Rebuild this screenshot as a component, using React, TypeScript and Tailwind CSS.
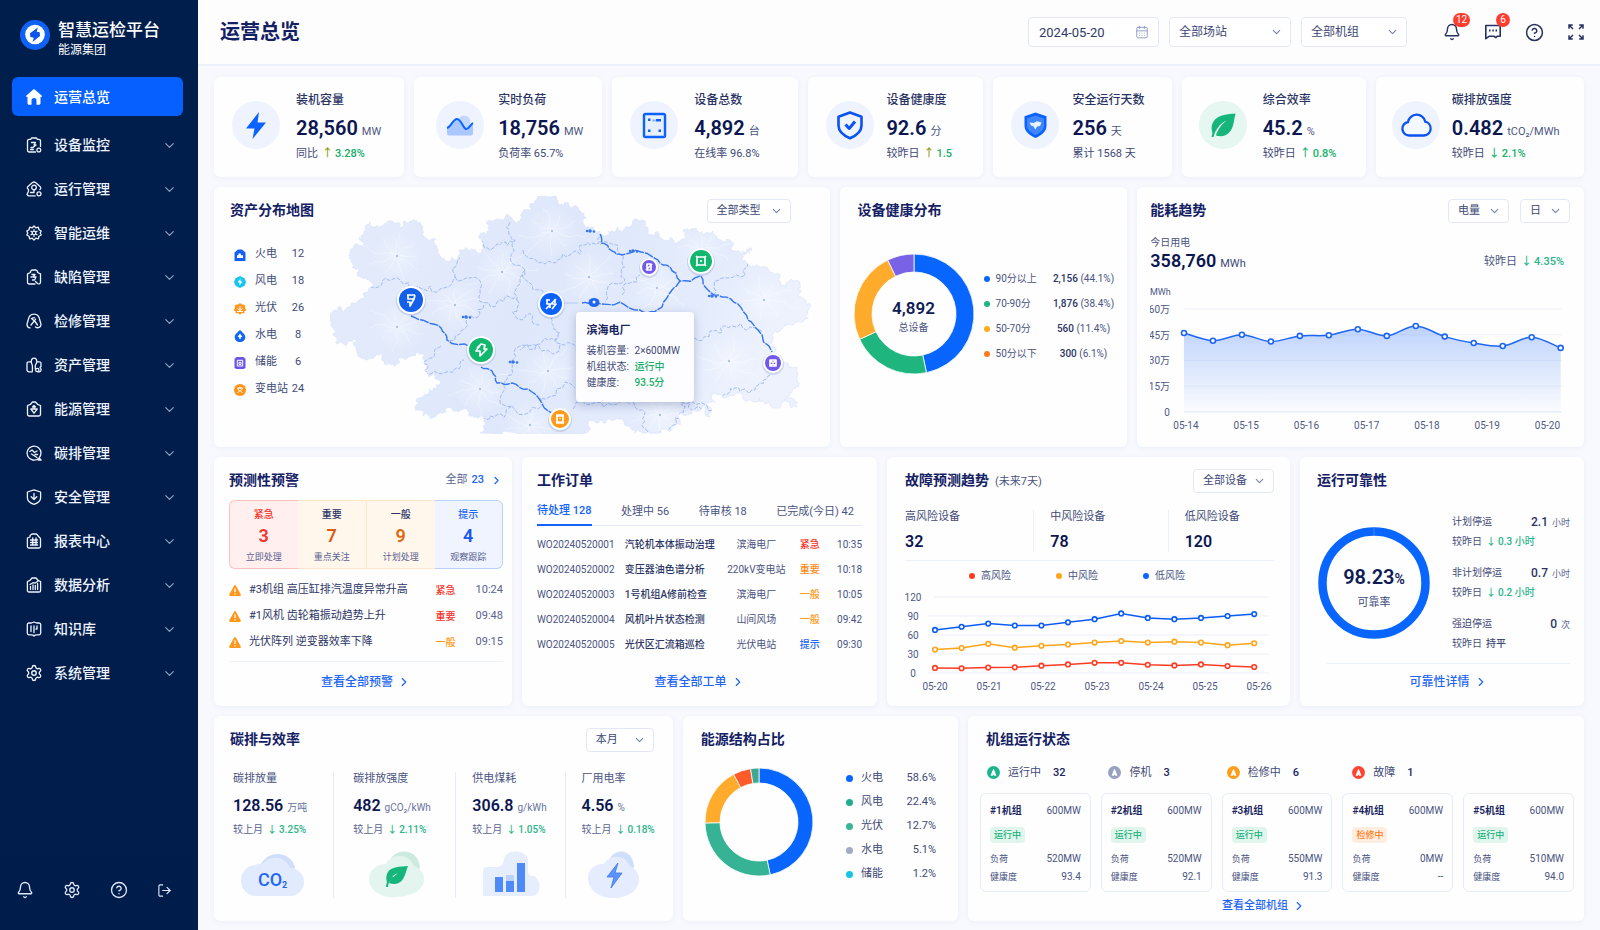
import React, { ReactNode } from 'react';
import clsx from 'clsx';
import {
  Bell,
  CalendarDays,
  ChevronDown,
  ChevronRight,
  CircleHelp,
  LogOut,
  Settings,
} from 'lucide-react';

type Point = [number, number];

/* ---------- helpers ---------- */

// Midpoint displacement, gives borders and rivers a natural ragged line
const roughen = (points: Point[], seed: number, amount: number, depth = 4) => {
  let state = seed;
  const random = () => {
    state = (state * 1103515245 + 12345) % 2147483648;
    return state / 2147483648 - 0.5;
  };
  let line = points;
  for (let level = 0; level < depth; level += 1) {
    const next: Point[] = [line[0]];
    for (let i = 1; i < line.length; i += 1) {
      const [ax, ay] = line[i - 1];
      const [bx, by] = line[i];
      const shift = random() * amount;
      next.push([(ax + bx) / 2 - (by - ay) * shift, (ay + by) / 2 + (bx - ax) * shift]);
      next.push([bx, by]);
    }
    line = next;
  }
  return `M${line.map(([x, y]) => `${x.toFixed(1)} ${y.toFixed(1)}`).join('L')}`;
};

const smoothPath = (points: Point[]) =>
  points.reduce((path, [x, y], i) => {
    if (i === 0) return `M${x} ${y}`;
    const before = points[Math.max(i - 2, 0)];
    const prev = points[i - 1];
    const after = points[Math.min(i + 1, points.length - 1)];
    const c1 = [prev[0] + (x - before[0]) / 6, prev[1] + (y - before[1]) / 6];
    const c2 = [x - (after[0] - prev[0]) / 6, y - (after[1] - prev[1]) / 6];
    return `${path}C${c1[0]} ${c1[1]} ${c2[0]} ${c2[1]} ${x} ${y}`;
  }, '');

/* ---------- shared pieces ---------- */

type CardProps = {
  children: ReactNode;
  className?: string;
};

const Card = ({ children, className }: CardProps) => (
  <section
    className={clsx(
      'relative flex min-w-0 flex-col rounded-md bg-[#fefefe] shadow-[0_1px_5px_rgba(40,70,150,0.06)]',
      className,
    )}
  >
    {children}
  </section>
);

const CardHeader = ({ title, note, children }: { title: string; note?: string; children?: ReactNode }) => (
  <div className="relative flex h-6 items-start justify-between">
    <h2 className="text-sm leading-[22px] font-semibold text-[#132064]">
      {title}
      {note && <span className="ml-1.5 text-[11px] font-normal text-[#4a5482]">{note}</span>}
    </h2>
    {children}
  </div>
);

type SelectProps = {
  label: string;
  value: string;
  className: string;
};

const Select = ({ label, value, className }: SelectProps) => (
  <div className={clsx('relative', className)}>
    <select
      aria-label={label}
      className="h-full w-full appearance-none rounded border border-[#e3e8f7] bg-white pr-5 pl-[9px] text-[#3d4775]"
    >
      <option>{value}</option>
    </select>
    <ChevronDown
      size={13}
      strokeWidth={2}
      className="pointer-events-none absolute top-1/2 right-2 -translate-y-1/2 text-[#7482ad]"
    />
  </div>
);

const MoreLink = ({ children, className }: CardProps) => (
  <a
    href="#"
    className={clsx('flex items-center justify-center gap-1 font-medium text-[#1f66f5]', className)}
  >
    {children}
    <ChevronRight size={14} />
  </a>
);

type DeltaProps = {
  label: string;
  arrow?: string;
  value: string;
  tone?: string;
  arrowTone?: string;
};

const Delta = ({ label, arrow, value, tone = 'text-[#2bb58a]', arrowTone }: DeltaProps) => (
  <>
    {label}
    {arrow && <span className={clsx('ml-1 font-medium', arrowTone ?? tone)}>{arrow}</span>}
    <span className={clsx('font-medium', arrow ? 'ml-0.5' : 'ml-1', tone)}>{value}</span>
  </>
);

type Slice = { from: number; to: number; color: string };

const Donut = ({ slices, outer, inner }: { slices: Slice[]; outer: number; inner: number }) => {
  const at = (angle: number, radius: number) => {
    const rad = (angle * Math.PI) / 180;
    return `${outer + radius * Math.sin(rad)} ${outer - radius * Math.cos(rad)}`;
  };
  return (
    <svg width={outer * 2} height={outer * 2} viewBox={`0 0 ${outer * 2} ${outer * 2}`}>
      {slices.map(({ from, to, color }) => {
        const large = to - from > 180 ? 1 : 0;
        return (
          <path
            key={from}
            fill={color}
            stroke="#fff"
            strokeWidth="0.8"
            d={`M${at(from, outer)}A${outer} ${outer} 0 ${large} 1 ${at(to, outer)}L${at(to, inner)}A${inner} ${inner} 0 ${large} 0 ${at(from, inner)}Z`}
          />
        );
      })}
    </svg>
  );
};

/* ---------- sidebar ---------- */

const MENU: { label: string; icon: ReactNode }[] = [
  {
    label: '设备监控',
    icon: (
      <>
        <path d="M9.500 15H3.200A1.700 1.700 0 0 1 1.500 13.300V4a1.700 1.700 0 0 1 1.700-1.700h1.500L5.500 1h5l.8 1.300h1.500A1.700 1.700 0 0 1 14.500 4v5.500" />
        <path d="M5.500 5.500h4L8 8h2L7 10.500H5M4.500 12.500h3" />
        <circle cx="12.800" cy="13" r="1.900" />
      </>
    ),
  },
  {
    label: '运行管理',
    icon: (
      <>
        <path d="M2.500 8.500C.8 7.500 1 5.500 2.800 4.800L6.500 1.600a2.300 2.300 0 0 1 3 0l3.700 3.200c1.800.7 2 2.700.7 3.700M2.500 8.500v1.800L1 13.500l1.500 1.400h6.700" />
        <circle cx="8" cy="6.500" r="2.300" />
        <path d="M8 8.800v2.400M4.500 11.500h3.500" />
        <circle cx="13" cy="12.800" r="2" />
      </>
    ),
  },
  {
    label: '智能运维',
    icon: (
      <>
        <path d="M6.300 2.800 8 .9l1.700 1.900 2.600-.6.7 2.500 2.200 1.300L14.200 8l1 2-2.200 1.300-.7 2.500-2.600-.6L8 15.100l-1.700-1.900-2.600.6-.7-2.500L.8 10l1-2-1-2L3 4.700l.7-2.500z" />
        <circle cx="8" cy="8" r="1.800" />
        <path d="M8 4.600v.6M8 10.800v.6M5 6.300l.5.300M10.500 9.400l.5.300M5 9.700l.5-.3M10.500 6.600l.5-.3" />
      </>
    ),
  },
  {
    label: '缺陷管理',
    icon: (
      <>
        <path d="M9 15H3.200a1.700 1.700 0 0 1-1.700-1.700V4.800l3-1.300V2.300L6 1h4l1.500 1.300v1.200l3 1.300v8.500a1.700 1.700 0 0 1-1.700 1.700" />
        <path d="M6 5.500h3L7 8h3l-1.500 3H6.500M5 8h1M9.500 12.500l2 2" />
      </>
    ),
  },
  {
    label: '检修管理',
    icon: (
      <>
        <path d="M4 14.800a3.400 3.400 0 0 1-3-3.400c0-1.500.8-2.400 1.200-4.400C2.800 3.500 5 1.200 8 1.200S13.200 3.500 13.800 7c.4 2 1.200 2.900 1.200 4.400a3.400 3.400 0 0 1-5.500 2.600" />
        <path d="M5.500 5.500 9 8.500l2.500 3.500M9.500 6.300 5 12M6.700 4.800h2" />
      </>
    ),
  },
  {
    label: '资产管理',
    icon: (
      <>
        <path d="M6.300 14.800H3a2 2 0 0 1-2-2V6.500a1.700 1.700 0 0 1 1.700-1.700h2.500c0-2 1-3.600 2.800-3.600s2.800 1.600 2.800 3.600h2.500A1.700 1.700 0 0 1 15 6.500v3l-1 1 1 1.500v1a1.800 1.800 0 0 1-1.800 1.800h-1.500" />
        <path d="M5.200 4.800c0 1.800 1.200 2.600 1.200 4.200v5M10.800 4.800c0 1.800-1.500 2.600-1.500 4.200v3" />
        <circle cx="11.300" cy="13" r="1.700" />
      </>
    ),
  },
  {
    label: '能源管理',
    icon: (
      <>
        <path d="M3.200 15A1.700 1.700 0 0 1 1.500 13.300V4.500l3-1.200L6.500 1h3l2 2.300 3 1.200v8.800a1.700 1.700 0 0 1-1.700 1.700z" />
        <path d="M4.800 8h6.400L8 12.200zM8 4.500v3.500M6.500 6 8 4.500 9.500 6" />
      </>
    ),
  },
  {
    label: '碳排管理',
    icon: (
      <>
        <path d="M12.500 13.500A7 7 0 1 1 15 8c0 2-.7 3.600-1.900 4.900l2 2.100h-3" />
        <path d="M3.800 6.500 6 5l2.500 2.500L11 6M5.500 9l5.500 3.500M9 9.500h2.500" />
      </>
    ),
  },
  {
    label: '安全管理',
    icon: (
      <>
        <path d="M8 .9 14.600 3v6c0 3-2.600 5-6.600 6.400C4 14 1.400 12 1.400 9V3z" />
        <path d="M8 4.500v5.800M5.200 7.800 8 10.500l2.800-2.700" />
      </>
    ),
  },
  {
    label: '报表中心',
    icon: (
      <>
        <path d="M3 15a1.600 1.600 0 0 1-1.600-1.600V5L4 4V2.500L6 1h4.500l3 3.500 1 1v8A1.600 1.600 0 0 1 13 15z" />
        <path d="M4.500 7h7M4.500 9.500h7M4.500 12h7M6.700 5v7M10 5v7" />
      </>
    ),
  },
  {
    label: '数据分析',
    icon: (
      <>
        <path d="M3 15a1.600 1.600 0 0 1-1.600-1.600V4.500L4 3.300 6 1h4l2 2.300 2.600 1.200v8.900A1.600 1.600 0 0 1 13 15z" />
        <path d="M4.500 12.500V9.300M7 12.500V8M9.300 12.500v-4M11.600 12.500v-6M4 7.500l3-1.800 2 .5L12 4" />
      </>
    ),
  },
  {
    label: '知识库',
    icon: (
      <>
        <path d="M8 15c-.8-1-1.500-1.200-2.500-1.200H3a1.700 1.700 0 0 1-1.700-1.700V3.700A1.700 1.700 0 0 1 3 2h2.500L8 1l2.500 1H13a1.700 1.700 0 0 1 1.700 1.700v8.400a1.700 1.700 0 0 1-1.700 1.700h-2.500c-1 0-1.700.2-2.500 1.200z" />
        <path d="M5 5v5.500M8 5v6.500M11 5v3h-1" />
      </>
    ),
  },
];

const SidebarIcon = ({ children }: { children: ReactNode }) => (
  <svg
    width="16"
    height="16"
    viewBox="0 0 16 16"
    fill="none"
    stroke="currentColor"
    strokeWidth="1.300"
    strokeLinecap="round"
    strokeLinejoin="round"
    className="overflow-visible"
  >
    {children}
  </svg>
);

const Sidebar = () => (
  <aside className="flex w-[198px] shrink-0 flex-col bg-[#001c4a] bg-linear-to-b from-[#001e4c] to-[#001c4a] text-white">
    <div className="flex items-start gap-2 pt-5 pl-5">
      <svg width="30" height="30" viewBox="0 0 30 30">
        <circle cx="15" cy="15" r="15" fill="#0e63f6" />
        <circle cx="15" cy="14.500" r="9.800" fill="#fff" />
        <path d="M17.800 7.500 10 13.300l.3 3.700 3.500.8-1.300 4.200 7.500-6-.3-3.700-3-.6z" fill="#0e55e8" />
      </svg>
      <div>
        <div className="text-[17px] leading-5 font-medium">智慧运检平台</div>
        <div className="text-xs leading-5">能源集团</div>
      </div>
    </div>

    <nav className="mt-[17px] px-3 text-sm font-medium">
      <a
        href="#"
        aria-current="page"
        className="mb-[7px] flex h-[39px] w-[171px] items-center gap-3 rounded-md bg-[#0560ff] pl-3.5"
      >
        <svg width="16" height="16" viewBox="0 0 16 16" fill="currentColor">
          <path d="M8 .3c.4 0 .7.1 1 .4l6.600 5.900c.6.600.3 1.400-.5 1.400h-.6v6.200c0 .9-.6 1.500-1.500 1.500h-2.500v-4.200a2.500 2.500 0 0 0-5 0v4.200H3c-.9 0-1.500-.6-1.500-1.500V8H.9C.1 8-.2 7.200.4 6.600L7 .7c.3-.3.600-.4 1-.4z" />
        </svg>
        运营总览
      </a>
      {MENU.map(({ label, icon }) => (
        <button key={label} type="button" className="flex h-11 w-full items-center gap-3 pl-3.5 text-[#eef3ff]">
          <SidebarIcon>{icon}</SidebarIcon>
          {label}
          <ChevronDown size={15} className="mr-[9px] ml-auto text-[#8b9cc2]" />
        </button>
      ))}
      <button type="button" className="flex h-11 w-full items-center gap-[11px] pl-[13px] text-[#eef3ff]">
        <Settings size={18} strokeWidth={1.800} />
        系统管理
        <ChevronDown size={15} className="mr-[9px] ml-auto text-[#8b9cc2]" />
      </button>
    </nav>

    <div className="mt-auto flex justify-between pr-[26px] pb-[31px] pl-4 text-[#dfe7f8]">
      <button type="button" aria-label="通知"><Bell size={18} strokeWidth={1.800} /></button>
      <button type="button" aria-label="设置"><Settings size={18} strokeWidth={1.800} /></button>
      <button type="button" aria-label="帮助"><CircleHelp size={18} strokeWidth={1.800} /></button>
      <button type="button" aria-label="退出"><LogOut size={15} strokeWidth={1.800} /></button>
    </div>
  </aside>
);

/* ---------- top bar ---------- */

const TopBar = () => (
  <header className="flex h-[66px] items-center border-b-2 border-[#edf1fa] bg-[#fdfdfe] pr-[15px] pl-[22px]">
    <h1 className="text-xl font-semibold text-[#132064]">运营总览</h1>
    <div className="ml-auto flex gap-2.5 text-xs">
      <div className="relative h-[30px] w-[131px]">
        <input
          type="text"
          aria-label="日期"
          defaultValue="2024-05-20"
          className="h-full w-full rounded border border-[#e3e8f7] bg-white pl-2.5 text-[13px] text-[#2f3a6b]"
        />
        <CalendarDays size={14} strokeWidth={1.600} className="absolute top-2 right-2.5 text-[#8d99c4]" />
      </div>
      <Select label="场站" value="全部场站" className="h-[30px] w-[122px]" />
      <Select label="机组" value="全部机组" className="h-[30px] w-[106px]" />
    </div>
    <div className="ml-9 flex items-center gap-[23px] text-[#27315f]">
      <button type="button" aria-label="告警" className="relative">
        <Bell size={18} strokeWidth={1.900} />
        <span className="absolute -top-2.5 left-2.5 rounded-full bg-[#ff3d2e] px-[3px] text-[10px] leading-[14px] text-white">
          12
        </span>
      </button>
      <button type="button" aria-label="消息" className="relative">
        <svg width="18" height="18" viewBox="0 0 18 18" fill="none" stroke="currentColor" strokeWidth="1.600" strokeLinejoin="round">
          <path d="M1.800 2.500h14.400v10.700h-2.700l-1.800 1.300-1.900-1.300H5.500l-3.700 2.500z" />
          <path d="M5 7.500h1.500M8.300 7.500h1.500M11.500 7.500H13" strokeWidth="1.800" />
        </svg>
        <span className="absolute -top-2.5 left-3 w-3.5 rounded-full bg-[#ff3d2e] text-center text-[10px] leading-[14px] text-white">
          6
        </span>
      </button>
      <button type="button" aria-label="帮助">
        <CircleHelp size={19} strokeWidth={1.900} />
      </button>
      <button type="button" aria-label="全屏">
        <svg width="18" height="18" viewBox="0 0 18 18" fill="none" stroke="currentColor" strokeWidth="1.500">
          <path d="M2 5.800V2h3.800M2.200 2.200 6 6M12.200 2H16v3.800M15.800 2.200 12 6M2 12.200V16h3.800M2.200 15.800 6 12M16 12.200V16h-3.800M15.800 15.800 12 12" />
        </svg>
      </button>
    </div>
  </header>
);

/* ---------- KPI row ---------- */

const GREEN = 'text-[#17b067]';
const OLIVE = 'text-[#8d9a10]';

type Kpi = {
  label: string;
  value: string;
  unit: string;
  foot: ReactNode;
  icon: ReactNode;
  box: string;
  disc?: string;
};

const KPIS: Kpi[] = [
  {
    label: '装机容量',
    value: '28,560',
    unit: 'MW',
    foot: <Delta label="同比" arrow="↑" value="3.28%" tone={GREEN} arrowTone={OLIVE} />,
    box: 'pl-[18px] gap-4',
    icon: <path d="m27 11-13 16.500h8.500L20.500 38 34 21.500h-8.500z" fill="#0b62ff" />,
  },
  {
    label: '实时负荷',
    value: '18,756',
    unit: 'MW',
    foot: '负荷率 65.7%',
    box: 'pl-[22px] gap-3.5',
    icon: (
      <>
        <circle cx="28" cy="21" r="6.500" fill="#c3d8ff" />
        <path d="M11 27c4-1 6-9 10-9 4 0 6 9 9 10 3 0 4-4 7-6v10a2.500 2.500 0 0 1-2.500 2.500h-21A2.500 2.500 0 0 1 11 32z" fill="#a9c8ff" />
        <path d="M11 27c4-1 6-9 10-9 4 0 6 9 9 10 3 0 4-4 7-6" fill="none" stroke="#0b62ff" strokeWidth="2" />
      </>
    ),
  },
  {
    label: '设备总数',
    value: '4,892',
    unit: '台',
    foot: '在线率 96.8%',
    box: 'pl-[18px] gap-4',
    icon: (
      <>
        <rect x="14" y="13" width="21" height="23" rx="1.500" fill="#e7efff" stroke="#0b62ff" strokeWidth="2.400" />
        <path d="M18 17.500h2.500V20H18zM26 18h5v2.500h-5zM18 28.500h2.500V31H18zM28.500 28.500H31V31h-2.500z" fill="#0b62ff" />
        <path d="M22.500 18.500h3v2h-3z" fill="#7fa9fb" />
      </>
    ),
  },
  {
    label: '设备健康度',
    value: '92.6',
    unit: '分',
    foot: <Delta label="较昨日" arrow="↑" value="1.5" tone={GREEN} arrowTone={OLIVE} />,
    box: 'pl-[18px] gap-3',
    icon: (
      <g fill="none" stroke="#0b52f0" strokeWidth="2.600" strokeLinejoin="round">
        <path d="m24 11.500 11.500 4.200v8.800c0 6-5 10-11.500 12.700-6.500-2.700-11.500-6.700-11.500-12.700v-8.800z" />
        <path d="m19.500 23.500 3.700 4L29 20.500" strokeWidth="3" />
      </g>
    ),
  },
  {
    label: '安全运行天数',
    value: '256',
    unit: '天',
    foot: '累计 1568 天',
    box: 'pl-[18px] gap-3.5',
    icon: (
      <>
        <path d="m24.500 11.500 11 3.800v9.500c0 5.700-5 9.700-11 12.200-6-2.500-11-6.500-11-12.200v-9.500z" fill="#0b62ff" />
        <path d="m24.500 14.500 8.500 2.900v7.300c0 4.300-4 7.300-8.500 9.300-4.500-2-8.500-5-8.500-9.300v-7.300z" fill="#3f87fb" />
        <path d="m18.500 21.500 4 .5 3.500-1.700 4.500 1.200-1.500 3.500-3 .5-1.500 3-2-3-2.500-1z" fill="#e8f1ff" />
      </>
    ),
  },
  {
    label: '综合效率',
    value: '45.2',
    unit: '%',
    foot: <Delta label="较昨日" arrow="↑" value="0.8%" tone={GREEN} />,
    box: 'pl-[17px] gap-4',
    disc: 'bg-[#e6f6f0]',
    icon: (
      <>
        <path d="M36.500 12.500c-8 .5-16 1.500-20.500 6-4.500 5-4 11-1.500 15C16 29 21 22.500 27.500 19.500 22 24 18 30 17 34.500c5 1.800 11 .5 14.500-4.500s3.500-12 5-17.500z" fill="#16b57b" />
        <path d="M13.500 36c.8-4 3-8.500 6-12" fill="none" stroke="#16b57b" strokeWidth="2" />
      </>
    ),
  },
  {
    label: '碳排放强度',
    value: '0.482',
    unit: 'tCO₂/MWh',
    foot: <Delta label="较昨日" arrow="↓" value="2.1%" tone={GREEN} />,
    box: 'pl-4 gap-3',
    icon: (
      <path
        d="M17 34.500a6.800 6.800 0 0 1-1-13.500 8.800 8.800 0 0 1 17.300-.3A7 7 0 0 1 32 34.500z"
        fill="#f4f8ff"
        stroke="#0b52f0"
        strokeWidth="2.300"
      />
    ),
  },
];

const KpiRow = () => (
  <div className="grid grid-cols-[190fr_188fr_186fr_174fr_179fr_184fr_208fr] gap-2.5">
    {KPIS.map(({ label, value, unit, foot, icon, box, disc }) => (
      <Card key={label}>
        <div className={clsx('flex min-h-[100px] items-center', box)}>
          <div className={clsx('-mt-1 shrink-0 rounded-full', disc ?? 'bg-[#eef3fe]')}>
            <svg width="48" height="48" viewBox="0 0 48 48">{icon}</svg>
          </div>
          <div className="whitespace-nowrap">
            <div className="text-xs leading-4 font-medium text-[#2b3565]">{label}</div>
            <div className="mt-2.5 mb-1 text-xl leading-5 font-semibold text-[#0c1650]">
              {value}
              <span className="ml-1 text-[11px] font-normal text-[#4d5785]">{unit}</span>
            </div>
            <div className="text-[11px] leading-4 text-[#3f4976]">{foot}</div>
          </div>
        </div>
      </Card>
    ))}
  </div>
);

/* ---------- asset map ---------- */

const OUTLINE: Point[] = [
  [417, 222], [400, 227], [385, 223], [362, 235], [363, 246], [350, 258], [353, 268], [367, 280], [370, 288],
  [357, 303], [345, 312], [330, 320], [333, 335], [357, 341], [358, 356], [372, 359], [390, 364], [408, 358],
  [423, 359], [427, 373], [440, 380], [430, 395], [417, 402], [423, 416], [446, 408], [473, 416], [480, 433],
  [586, 433], [598, 423], [613, 420], [630, 426], [643, 433], [660, 433], [680, 425], [710, 417], [707, 406],
  [727, 397], [753, 402], [775, 408], [797, 407], [790, 392], [797, 380], [790, 368], [777, 357], [780, 331],
  [795, 322], [810, 304], [800, 297], [796, 281], [770, 272], [747, 263], [752, 250], [730, 240], [713, 231],
  [693, 229], [680, 241], [662, 240], [648, 233], [645, 224], [633, 222], [622, 232], [602, 235], [583, 223],
  [577, 207], [560, 205], [550, 197], [535, 204], [523, 211], [515, 222], [500, 219], [489, 220], [480, 233],
  [489, 243], [477, 252], [458, 257], [437, 252], [436, 239], [423, 231], [417, 222],
];

const BORDERS: Point[][] = [
  [[366, 285], [375, 288], [400, 280], [430, 286], [455, 277], [460, 258]],
  [[455, 277], [480, 290], [497, 302], [517, 300], [525, 275], [515, 240], [510, 222]],
  [[480, 241], [497, 244], [515, 240]],
  [[523, 250], [545, 264], [570, 255], [583, 245], [600, 236]],
  [[484, 305], [466, 322], [447, 340]],
  [[517, 300], [522, 320], [540, 325]],
  [[441, 346], [430, 358], [426, 372], [450, 372], [464, 360]],
  [[560, 345], [523, 345], [512, 370], [503, 385], [512, 406], [490, 416], [475, 425]],
  [[512, 406], [540, 398], [575, 388]],
  [[551, 318], [560, 333], [545, 338], [520, 350]],
  [[556, 338], [576, 352]],
  [[600, 245], [622, 262], [625, 280], [605, 302]],
  [[525, 270], [540, 290], [545, 300]],
  [[622, 295], [640, 275]],
  [[713, 295], [728, 278], [748, 258]],
  [[694, 338], [710, 331], [732, 326], [762, 331]],
  [[770, 375], [755, 390], [735, 388], [722, 398], [692, 402]],
  [[682, 402], [675, 418], [660, 432]],
  [[682, 402], [705, 408]],
  [[628, 402], [644, 416], [648, 433]],
  [[573, 409], [596, 402], [630, 404]],
];

const ROUTES: Point[][] = [
  [[411, 316], [427, 322], [441, 328], [447, 340], [470, 347]],
  [[481, 367], [492, 371], [497, 383], [512, 383], [528, 389], [540, 400], [552, 413]],
  [[600, 234], [601, 243], [612, 251], [622, 255], [635, 250], [658, 260], [670, 267], [680, 281], [700, 276]],
  [[701, 276], [708, 290], [722, 297], [738, 304], [748, 320], [758, 330], [772, 352]],
  [[582, 303], [594, 303], [620, 302], [640, 310], [647, 313], [662, 307], [672, 290], [680, 281]],
];

const HUBS: Point[] = [
  [397, 256], [397, 327], [502, 272], [552, 231], [589, 277], [480, 389], [548, 371], [657, 288], [764, 300],
  [729, 361], [620, 380], [455, 305], [530, 425], [700, 250], [660, 415],
];

const SPARKS: Point[] = [[590, 231], [466, 317], [513, 362], [633, 251], [712, 296]];

const MARKERS: { at: Point; r: number; color: string; glyph: string }[] = [
  { at: [411, 300], r: 12, color: '#1560ea', glyph: 'M-4-5h8M-3-5v4h6l1-4M3-1-1 6l0-4h-3' },
  { at: [481, 350], r: 12, color: '#12b76f', glyph: 'M0-6l4 1-1 4h3L-1 6l0-5h-4zM-4-2l3-3' },
  { at: [551, 304], r: 11, color: '#0b62ff', glyph: 'M-4-5v5h4M-4-4h3M5-5-5 5M1 0h4l-4 5M4-5v4M-1 1v3' },
  { at: [701, 261], r: 11, color: '#12b76f', glyph: 'M-4-4h8v8h-8zM-5-5l2 2M5-5l-2 2M-5 5l2-2M5 5l-2-2M0-1v2' },
  { at: [649, 267], r: 7, color: '#7359ea', glyph: 'M-2-3h4v6h-4zM-3 3l5-5M3-3l-2 2' },
  { at: [773, 363], r: 8, color: '#7059ea', glyph: 'M-3-3h6v6h-6zM-3-3l6 6M-3 3l6-6' },
  { at: [560, 419], r: 9, color: '#ff9a1a', glyph: 'M-3-3h6v6h-6zM-4-4h8M-4 4h8M0-1v1' },
];

const MapCanvas = () => (
  <svg width="484" height="238" viewBox="330 196 484 238" className="block">
    <defs>
      <linearGradient id="land" x1="0" y1="0" x2="1" y2="0.300">
        <stop offset="0" stopColor="#e4ebfb" />
        <stop offset="0.500" stopColor="#dfe8fb" />
        <stop offset="0.800" stopColor="#e3ebfc" />
        <stop offset="1" stopColor="#edf2fd" />
      </linearGradient>
      <radialGradient id="glow">
        <stop offset="0" stopColor="#fff" stopOpacity="0.350" />
        <stop offset="1" stopColor="#fff" stopOpacity="0" />
      </radialGradient>
      <clipPath id="coast">
        <path d={roughen(OUTLINE, 77, 0.9)} />
      </clipPath>
    </defs>
    <path d={roughen(OUTLINE, 77, 0.9)} fill="url(#land)" stroke="#d6e1fa" strokeWidth="0.600" />
    <g clipPath="url(#coast)">
      {HUBS.map(([x, y], hub) => (
        <g key={`${x}-${y}`}>
          <circle cx={x} cy={y} r="26" fill="url(#glow)" />
          {Array.from({ length: 9 }, (_, i) => {
            const angle = (i * 2 * Math.PI) / 9 + hub;
            const reach = 20 + ((i * 7 + hub * 5) % 18);
            const tip: Point = [x + Math.cos(angle) * reach, y + Math.sin(angle) * reach * 0.8];
            return (
              <path
                key={i}
                d={roughen([[x, y], tip], i * 31 + hub + 5, 0.3, 3)}
                fill="none"
                stroke="#fff"
                strokeOpacity="0.550"
                strokeWidth="0.700"
              />
            );
          })}
          <circle cx={x} cy={y} r="1.200" fill="#a9c0f2" />
        </g>
      ))}
      {BORDERS.map((line, i) => (
        <path
          key={i}
          d={roughen(line, i * 13 + 3, 0.8, 3)}
          fill="none"
          stroke="#9bb6f2"
          strokeWidth="0.900"
          strokeDasharray="4 1.500"
        />
      ))}
    </g>
    {ROUTES.map((line, i) => (
      <path
        key={i}
        d={roughen(line, i * 17 + 9, 0.3, 2)}
        fill="none"
        stroke="#3474ee"
        strokeWidth="1.400"
        strokeDasharray="9 1"
      />
    ))}
    <path d="M564 303h14" stroke="#b6caf6" />
    {SPARKS.map(([x, y]) => (
      <g key={x} fill="#3474ee">
        <circle cx={x - 3} cy={y} r="1.200" />
        <circle cx={x} cy={y} r="1.800" />
        <circle cx={x + 4} cy={y + 0.5} r="1.300" />
      </g>
    ))}
    <ellipse cx="594" cy="302.500" rx="5.500" ry="4.500" fill="#1f66f5" />
    <circle cx="594" cy="302" r="1.500" fill="#fff" />
    {MARKERS.map(({ at: [x, y], r, color, glyph }) => (
      <g key={x} transform={`translate(${x} ${y})`}>
        <circle r={r + 3} fill="#3c5ea8" opacity="0.180" cy="1" />
        <circle r={r + 2} fill="#fff" />
        <circle r={r} fill={color} />
        <path d={glyph} fill="none" stroke="#fff" strokeWidth="1.700" strokeLinejoin="round" />
      </g>
    ))}
  </svg>
);

const ASSETS: { label: string; count: number; icon: ReactNode }[] = [
  {
    label: '火电',
    count: 12,
    icon: (
      <>
        <path d="M.5 3.500 4 .5h4l3.500 3V12H.5z" fill="#1560f0" />
        <path d="M3 9V6.200h1.500V4.500h2.300v1.700H9V9z" fill="#fff" />
      </>
    ),
  },
  {
    label: '风电',
    count: 18,
    icon: (
      <>
        <path d="M6 0l4.500 2.200L12 6l-1.500 3.800L6 12 1.500 9.800 0 6l1.500-3.800z" fill="#15c5f0" />
        <path d="M6.500 2.500 3.500 6.500h2L5.500 9.500l3-4H6.500z" fill="#fff" />
      </>
    ),
  },
  {
    label: '光伏',
    count: 26,
    icon: (
      <>
        <path d="M6 0l2 1.500 2.800.3.200 2.700L12.300 7l-2 1.500.2 2-3-.5L6 12l-1.500-2-3 .5.200-2-2-1.500L1 4.500l.2-2.700L4 1.500z" fill="#ff971a" />
        <path d="M6 3v4.500M3.500 5.500 6 7.500l2.500-2M3 8.500h6" stroke="#fff" fill="none" />
      </>
    ),
  },
  {
    label: '水电',
    count: 8,
    icon: (
      <>
        <path d="M6 0c2 2.200 5.300 4 5.300 7.200C11.300 10 9 12 6 12S.7 10 .7 7.200C.7 4 4 2.200 6 0z" fill="#1266f5" />
        <path d="M6 3.500 3.500 7h1.700v2h1.600V7h1.700z" fill="#fff" />
      </>
    ),
  },
  {
    label: '储能',
    count: 6,
    icon: (
      <>
        <path d="M2.500 0h7L11.500 2v8.500L10 12H2L.5 10.500V2z" fill="#6a55e8" />
        <path d="M3.300 3.300h5.400V9H3.300zM5 5.300h2v2H5z" stroke="#fff" fill="none" />
      </>
    ),
  },
  {
    label: '变电站',
    count: 24,
    icon: (
      <>
        <circle cx="6" cy="6" r="6" fill="#ff9213" />
        <path d="M3.500 4h5L7 6.500h-2zM3.500 9 6 6.500 8.500 9M5 3l2 1" stroke="#fff" fill="none" />
      </>
    ),
  },
];

const AssetMapCard = () => (
  <Card className="px-4 pt-3">
    <div className="absolute top-[9px] right-4">
      <MapCanvas />
      <div className="absolute top-[116px] left-[246px] h-[90px] w-[118px] rounded bg-[#fdfdff] px-[11px] pt-[11px] shadow-[0_3px_10px_rgba(40,60,120,0.280)]">
        <div className="mb-1 text-[11px] leading-4 font-semibold text-[#1b2660]">滨海电厂</div>
        <dl className="grid grid-cols-[48px_1fr] text-[10px] leading-4 whitespace-nowrap text-[#3f4976]">
          <dt>装机容量:</dt>
          <dd>2×600MW</dd>
          <dt>机组状态:</dt>
          <dd className="font-medium text-[#17b067]">运行中</dd>
          <dt>健康度:</dt>
          <dd className="font-medium text-[#17b067]">93.5分</dd>
        </dl>
      </div>
    </div>
    <CardHeader title="资产分布地图">
      <Select label="类型" value="全部类型" className="mr-[23px] h-6 w-[84px] text-[11px]" />
    </CardHeader>
    <ul className="relative mt-[18px] pl-1 text-[11px] text-[#414b78]">
      {ASSETS.map(({ label, count, icon }) => (
        <li key={label} className="flex h-[27px] items-center">
          <svg width="12" height="12" viewBox="0 0 12 12" className="mr-[9px]">{icon}</svg>
          <span className="w-9">{label}</span>
          <span className="w-3.5 text-center">{count}</span>
        </li>
      ))}
    </ul>
  </Card>
);

/* ---------- health distribution ---------- */

const HEALTH_SLICES: Slice[] = [
  { from: 0, to: 168, color: '#0866ff' },
  { from: 168, to: 245, color: '#1fb57f' },
  { from: 245, to: 334, color: '#ffab2b' },
  { from: 334, to: 360, color: '#7a62e6' },
];

const HEALTH = [
  { label: '90分以上', count: '2,156', share: '(44.1%)', dot: 'bg-[#0866ff]' },
  { label: '70-90分', count: '1,876', share: '(38.4%)', dot: 'bg-[#1fb57f]' },
  { label: '50-70分', count: '560', share: '(11.4%)', dot: 'bg-[#ffab1b]' },
  { label: '50分以下', count: '300', share: '(6.1%)', dot: 'bg-[#ff7a1a]' },
];

const HealthCard = () => (
  <Card className="px-[18px] pt-3">
    <CardHeader title="设备健康分布" />
    <div className="-mx-1 mt-[31px] flex items-center gap-2.5">
      <div className="relative shrink-0">
        <Donut slices={HEALTH_SLICES} outer={60} inner={42} />
        <div className="absolute inset-0 flex flex-col items-center justify-center">
          <div className="mt-1.5 text-[17px] leading-5 font-semibold text-[#101c56]">4,892</div>
          <div className="mt-0.5 text-[10px] leading-4 text-[#4a5482]">总设备</div>
        </div>
      </div>
      <ul className="pt-1 text-[10px] leading-[25px] whitespace-nowrap text-[#4a5482]">
        {HEALTH.map(({ label, count, share, dot }) => (
          <li key={label} className="flex items-center">
            <i className={clsx('mr-1.5 size-1.5 rounded-full', dot)} />
            <span className="w-14">{label}</span>
            <span className="w-16 text-center">
              <b className="font-medium text-[#2b3565]">{count}</b> {share}
            </span>
          </li>
        ))}
      </ul>
    </div>
  </Card>
);

/* ---------- energy trend ---------- */

const ENERGY = [46, 41.5, 45, 41, 44.3, 44.7, 48.2, 44.3, 50.1, 43.9, 40.2, 38.4, 43.5, 37.3];
const ENERGY_DAYS = ['05-14', '05-15', '05-16', '05-17', '05-18', '05-19', '05-20'];

const EnergyChart = () => {
  const points = ENERGY.map((value, i): Point => [34 + i * 29, 128 - (value * 103) / 60]);
  const line = smoothPath(points);
  return (
    <svg viewBox="0 0 420 150" className="mt-2 block w-full" fontSize="10" fill="#4f5987">
      <defs>
        <linearGradient id="energy-fill" x1="0" y1="0" x2="0" y2="1">
          <stop offset="0" stopColor="#4b86f8" stopOpacity="0.360" />
          <stop offset="1" stopColor="#4b86f8" stopOpacity="0.020" />
        </linearGradient>
      </defs>
      <text x="0" y="11" fontSize="9">MWh</text>
      {['60万', '45万', '30万', '15万', '0'].map((label, i) => (
        <g key={label}>
          <text x="20" y={29 + i * 25.75} textAnchor="end">{label}</text>
          <path d={`M34 ${25 + i * 25.75}H412`} stroke={i === 4 ? '#dde4f3' : '#eef1f9'} />
        </g>
      ))}
      <path d={`${line}V128H34Z`} fill="url(#energy-fill)" />
      <path d={line} fill="none" stroke="#1f66f5" strokeWidth="1.500" />
      {points.map(([x, y]) => (
        <circle key={x} cx={x} cy={y} r="2.500" fill="#fff" stroke="#1f66f5" strokeWidth="1.600" />
      ))}
      {ENERGY_DAYS.map((day, i) => (
        <text key={day} x={36 + i * 60.3} y="145" textAnchor="middle">{day}</text>
      ))}
    </svg>
  );
};

const EnergyTrendCard = () => (
  <Card className="pt-3 pr-3.5 pl-[13px]">
    <CardHeader title="能耗趋势">
      <div className="flex gap-[11px] text-[11px]">
        <Select label="指标" value="电量" className="h-6 w-[61px]" />
        <Select label="周期" value="日" className="h-6 w-[50px]" />
      </div>
    </CardHeader>
    <div className="mt-3.5 text-[10px] leading-3 text-[#4a5482]">今日用电</div>
    <div className="flex items-center justify-between">
      <div className="text-lg leading-6 font-semibold text-[#0c1650]">
        358,760<span className="ml-1 text-[11px] font-normal text-[#3f4976]">MWh</span>
      </div>
      <div className="pr-1.5 text-[11px] text-[#4a5482]">
        <Delta label="较昨日" arrow="↓" value="4.35%" />
      </div>
    </div>
    <EnergyChart />
  </Card>
);

/* ---------- predictive alerts ---------- */

const LEVELS = [
  { label: '紧急', count: 3, hint: '立即处理', box: 'rounded-l-md border-l border-y border-[#ffc1bd] bg-[#fff0ef]', tone: 'text-[#f5342b]', labelTone: 'text-[#f5342b]' },
  { label: '重要', count: 7, hint: '重点关注', box: 'border-y border-[#fde6cb] bg-[#fff7ec]', tone: 'text-[#dd5a10]', labelTone: 'text-[#2b3565]' },
  { label: '一般', count: 9, hint: '计划处理', box: 'border-y border-l border-[#fde6cb] bg-[#fff7ec]', tone: 'text-[#dd6a10]', labelTone: 'text-[#2b3565]' },
  { label: '提示', count: 4, hint: '观察跟踪', box: 'rounded-r-md border-r border-y border-[#bcd1fb] bg-[#eff4ff]', tone: 'text-[#1a55ee]', labelTone: 'text-[#1f66f5]' },
];

const ALERTS = [
  { text: '#3机组 高压缸排汽温度异常升高', level: '紧急', tone: 'text-[#f5342b]', time: '10:24' },
  { text: '#1风机 齿轮箱振动趋势上升', level: '重要', tone: 'text-[#f5342b]', time: '09:48' },
  { text: '光伏阵列 逆变器效率下降', level: '一般', tone: 'text-[#ff9a1a]', time: '09:15' },
];

const AlertsCard = () => (
  <Card className="pt-3 pr-[9px] pb-3.5 pl-[15px]">
    <CardHeader title="预测性预警">
      <a href="#" className="flex items-center text-[11px] leading-[22px] text-[#5a6491]">
        全部 <b className="mr-1.5 ml-1 font-medium text-[#1f66f5]">23</b>
        <ChevronRight size={13} className="text-[#1f66f5]" />
      </a>
    </CardHeader>
    <div className="mt-[7px] grid grid-cols-4 text-center">
      {LEVELS.map(({ label, count, hint, box, tone, labelTone }) => (
        <div key={label} className={clsx('pt-[7px] pb-1', box)}>
          <div className={clsx('text-[10px] leading-3.5 font-medium', labelTone)}>{label}</div>
          <div className={clsx('my-1 text-lg leading-5 font-semibold', tone)}>{count}</div>
          <div className="text-[9px] leading-3.5 text-[#5a6491]">{hint}</div>
        </div>
      ))}
    </div>
    <ul className="mt-2 border-b border-[#edf1f9] pb-1.5 text-[11px]">
      {ALERTS.map(({ text, level, tone, time }) => (
        <li key={text} className="flex h-[26px] items-center whitespace-nowrap text-[#2b3565]">
          <svg width="12" height="11" viewBox="0 0 12 11" className="mr-2 shrink-0">
            <path d="M5.200.6a.9.900 0 0 1 1.600 0l5 9c.3.700 0 1.400-.8 1.400H1c-.8 0-1.100-.7-.8-1.400z" fill="#ff971a" />
            <path d="M6 3.500v3.500M6 8.200v1.300" stroke="#fff" strokeWidth="1.300" />
          </svg>
          {text}
          <span className={clsx('ml-auto text-[10px] font-medium', tone)}>{level}</span>
          <span className="ml-5 text-[#5a6491]">{time}</span>
        </li>
      ))}
    </ul>
    <MoreLink className="mt-auto text-xs leading-5">查看全部预警</MoreLink>
  </Card>
);

/* ---------- work orders ---------- */

const TABS = ['待处理 128', '处理中 56', '待审核 18', '已完成(今日) 42'];

const ORDERS = [
  { id: 'WO20240520001', name: '汽轮机本体振动治理', site: '滨海电厂', level: '紧急', tone: 'text-[#f5342b]', time: '10:35' },
  { id: 'WO20240520002', name: '变压器油色谱分析', site: '220kV变电站', level: '重要', tone: 'text-[#ff8a1a]', time: '10:18' },
  { id: 'WO20240520003', name: '1号机组A修前检查', site: '滨海电厂', level: '一般', tone: 'text-[#ff9a1a]', time: '10:05' },
  { id: 'WO20240520004', name: '风机叶片状态检测', site: '山间风场', level: '一般', tone: 'text-[#ff9a1a]', time: '09:42' },
  { id: 'WO20240520005', name: '光伏区汇流箱巡检', site: '光伏电站', level: '提示', tone: 'text-[#1f66f5]', time: '09:30' },
];

const WorkOrdersCard = () => (
  <Card className="px-[15px] pt-3 pb-3.5">
    <CardHeader title="工作订单" />
    <div role="tablist" className="mt-[11px] flex justify-between border-b border-[#e4eaf6] pr-2 text-[11px] leading-3.5 whitespace-nowrap">
      {TABS.map((tab, i) => (
        <button
          key={tab}
          type="button"
          role="tab"
          aria-selected={i === 0}
          className={clsx(
            '-mb-px pb-1.5',
            i === 0 ? 'border-b-2 border-[#1463ff] font-medium text-[#1463ff]' : 'text-[#4a5482]',
          )}
        >
          {tab}
        </button>
      ))}
    </div>
    <table className="mt-1.5 w-full table-fixed text-[10px] whitespace-nowrap text-[#4a5482]">
      <colgroup>
        <col className="w-[27%]" />
        <col className="w-[29%]" />
        <col className="w-[23%]" />
        <col className="w-[8%]" />
        <col className="w-[13%]" />
      </colgroup>
      <tbody>
        {ORDERS.map(({ id, name, site, level, tone, time }) => (
          <tr key={id} className="h-[25px]">
            <td>{id}</td>
            <td className="font-medium text-[#2b3565]">{name}</td>
            <td className="text-center">{site}</td>
            <td className={clsx('text-right font-medium', tone)}>{level}</td>
            <td className="text-right">{time}</td>
          </tr>
        ))}
      </tbody>
    </table>
    <MoreLink className="mt-auto text-xs leading-5">查看全部工单</MoreLink>
  </Card>
);

/* ---------- fault forecast ---------- */

const RISKS = [
  { label: '高风险', count: 32, dot: 'bg-[#ff3b22]', pad: '' },
  { label: '中风险', count: 78, dot: 'bg-[#ffa51a]', pad: 'border-l border-[#edf1f9] pl-4' },
  { label: '低风险', count: 120, dot: 'bg-[#0866ff]', pad: 'border-l border-[#edf1f9] pl-4' },
];

const FORECAST = [
  { color: '#0b5cf5', values: [68, 73, 78, 75, 75, 80, 85, 94, 87, 85, 87, 90, 93] },
  { color: '#ffa51a', values: [37, 39.5, 46, 40, 43, 45, 48, 50.5, 48, 49.5, 48, 44, 47] },
  { color: '#ff3b22', values: [8, 7.5, 8.5, 9, 11.5, 13.5, 16, 16, 13, 12, 13.5, 11, 9.5] },
];

const FORECAST_DAYS = ['05-20', '05-21', '05-22', '05-23', '05-24', '05-25', '05-26'];

const ForecastChart = () => (
  <svg viewBox="0 0 369 108" className="mt-1.5 block w-full" fontSize="10" fill="#4f5987">
    {[120, 90, 60, 30, 0].map((tick, i) => (
      <g key={tick}>
        <text x="8" y={11.5 + i * 19} textAnchor="middle">{tick}</text>
        <path d={`M${i === 0 ? 29 : 23} ${8 + i * 19}H364`} stroke="#ebeff8" />
      </g>
    ))}
    {FORECAST.map(({ color, values }) => {
      const points = values.map((value, i): Point => [30 + i * 26.6, 84 - (value * 76) / 120]);
      return (
        <g key={color} stroke={color}>
          <path d={`M${points.join('L')}`} fill="none" strokeWidth="1.500" />
          {points.map(([x, y]) => (
            <circle key={x} cx={x} cy={y} r="2.300" fill="#fff" strokeWidth="1.600" />
          ))}
        </g>
      );
    })}
    {FORECAST_DAYS.map((day, i) => (
      <text key={day} x={30 + i * 54} y="101" textAnchor="middle">{day}</text>
    ))}
  </svg>
);

const ForecastCard = () => (
  <Card className="pt-3 pr-4 pl-[18px]">
    <CardHeader title="故障预测趋势" note="(未来7天)">
      <Select label="设备" value="全部设备" className="h-6 w-[81px] text-[11px]" />
    </CardHeader>
    <div className="mt-[17px] grid grid-cols-[128fr_134fr_106fr] border-b border-[#edf1f9] pb-2">
      {RISKS.map(({ label, count, pad }) => (
        <div key={label} className={pad}>
          <div className="text-[11px] leading-3.5 text-[#3f4976]">{label}设备</div>
          <div className="mt-2 text-base leading-5 font-semibold text-[#0c1650]">{count}</div>
        </div>
      ))}
    </div>
    <ul className="mt-2 ml-16 flex gap-[45px] text-[10px] leading-3.5 text-[#4a5482]">
      {RISKS.map(({ label, dot }) => (
        <li key={label} className="flex items-center gap-1.5">
          <i className={clsx('size-1.5 rounded-full', dot)} />
          {label}
        </li>
      ))}
    </ul>
    <ForecastChart />
  </Card>
);

/* ---------- reliability ---------- */

const OUTAGES = [
  { label: '计划停运', value: '2.1', unit: '小时', arrow: '↓', diff: '0.3 小时', tone: 'text-[#2bb58a]' },
  { label: '非计划停运', value: '0.7', unit: '小时', arrow: '↓', diff: '0.2 小时', tone: 'text-[#2bb58a]' },
  { label: '强迫停运', value: '0', unit: '次', arrow: undefined, diff: '持平', tone: 'text-[#3f4976]' },
];

const ReliabilityCard = () => (
  <Card className="pt-3 pr-3.5 pb-3.5 pl-[17px]">
    <CardHeader title="运行可靠性" />
    <div className="mt-[22px] flex items-center gap-[22px] pl-px">
      <div className="relative shrink-0">
        <svg width="112" height="112" viewBox="0 0 112 112">
          <circle cx="56" cy="56" r="51.500" fill="none" stroke="#0866ff" strokeWidth="8.500" />
          <path d="M56 0v9" stroke="#5b97ff" strokeWidth="0.700" />
        </svg>
        <div className="absolute inset-0 flex flex-col items-center justify-center pt-3">
          <div className="text-xl leading-5 font-semibold text-[#101c56]">
            98.23<span className="text-sm">%</span>
          </div>
          <div className="mt-1.5 text-[11px] leading-4 text-[#3f4976]">可靠率</div>
        </div>
      </div>
      <dl className="grid min-w-0 flex-1 gap-[18px] text-[10px] whitespace-nowrap text-[#4a5482]">
        {OUTAGES.map(({ label, value, unit, arrow, diff, tone }) => (
          <div key={label}>
            <dt className="flex justify-between leading-3.5 text-[#3f4976]">
              {label}
              <span className="text-[9px] text-[#5a6491]">
                <b className="mr-1 text-xs leading-3.5 font-medium text-[#2b3565]">{value}</b>
                {unit}
              </span>
            </dt>
            <dd className="mt-1.5 leading-3">
              <Delta label="较昨日" arrow={arrow} value={diff} tone={tone} />
            </dd>
          </div>
        ))}
      </dl>
    </div>
    <div className="mt-[13px] ml-2.5 border-b border-[#edf1f9]" />
    <MoreLink className="mt-auto pl-2.5 text-xs leading-5">可靠性详情</MoreLink>
  </Card>
);

/* ---------- carbon & efficiency ---------- */

const CARBON = [
  {
    label: '碳排放量',
    value: '128.56',
    unit: '万吨',
    diff: '3.25%',
    pad: 'pl-[3px]',
    artPad: 'ml-2',
    art: (
      <>
        <path d="M19 17a18 17 0 0 1 35 0l-4 12H20z" fill="#cfdffb" />
        <path d="M15 46a14.500 15.500 0 0 1-1-31 14 14 0 0 1 8-1c3-7 21-11 27 4a14 14 0 0 1 0 28z" fill="#e2ebfd" />
        <text x="17" y="36" fontSize="18" fontWeight="500" fill="#1f66f5">CO</text>
        <text x="41" y="38" fontSize="9" fontWeight="700" fill="#1f66f5">2</text>
      </>
    ),
  },
  {
    label: '碳排放强度',
    value: '482',
    unit: 'gCO₂/kWh',
    diff: '2.11%',
    pad: 'border-l border-[#e6ebf7] pl-[19px]',
    artPad: 'ml-3',
    art: (
      <>
        <path d="M24 13C28-3 54-3 55 18l-8 8z" fill="#cdeadf" />
        <path d="M32 47c-14 2-28-6-28-18C4 20 12 14 21 14c4-9 22-13 28 2 6 2 10 7 10 13 0 12-13 17-27 18z" fill="#e3f5ee" />
        <path d="M43 16c-8 .5-17 1-20 6s-1 9-1 11c2-4 6-8 11-10-4 3-8 7-9 10 5 2 11 1 14-4s3-8 5-13z" fill="#16b57b" />
        <path d="M22 37c0-4 3-8 6-10" fill="none" stroke="#16b57b" strokeWidth="2" />
      </>
    ),
  },
  {
    label: '供电煤耗',
    value: '306.8',
    unit: 'g/kWh',
    diff: '1.05%',
    pad: 'border-l border-[#e6ebf7] pl-4',
    artPad: 'ml-2',
    art: (
      <>
        <path d="M3 46V21q0-4 4-4h10q6 0 7-8c1-10 22-10 24 0v13q0 4 5 4c9 2 9 20-1 20z" fill="#e6eefd" />
        <path d="M15 27h8v15h-8zM26 31h8v11h-8zM37 13h8v29h-8z" fill="#4e8bf8" />
        <path d="M26 25h8v6h-8z" fill="#bcd2fc" />
      </>
    ),
  },
  {
    label: '厂用电率',
    value: '4.56',
    unit: '%',
    diff: '0.18%',
    pad: 'border-l border-[#e6ebf7] pl-4',
    artPad: '',
    art: (
      <>
        <path d="M26 13C30-3 51-3 52 17l-8 8z" fill="#cfdffb" />
        <path d="M31 48C16 48 6 39 6 28c0-9 8-15 16-14 5-9 20-11 26 2 6 3 9 8 9 13 0 11-10 19-26 19z" fill="#e4ecfd" />
        <path d="m36 13-11 14h7l-3 11 11-15h-7z" fill="#5e94f7" stroke="#3c79f0" strokeWidth="0.800" />
      </>
    ),
  },
];

const CarbonCard = () => (
  <Card className="px-4 pt-3">
    <CardHeader title="碳排与效率">
      <Select label="时间" value="本月" className="mr-[3px] h-6 w-[68px] text-[11px]" />
    </CardHeader>
    <div className="mt-5 grid grid-cols-[103fr_122fr_109fr_92fr]">
      {CARBON.map(({ label, value, unit, diff, pad, artPad, art }) => (
        <div key={label} className={clsx('flex min-w-0 flex-col whitespace-nowrap', pad)}>
          <div className="text-[11px] leading-3.5 text-[#4a5482]">{label}</div>
          <div className="mt-2.5 text-base leading-5 font-semibold text-[#0c1650]">
            {value}
            <span className="ml-1 text-[10px] font-normal text-[#6a749e]">{unit}</span>
          </div>
          <div className="mt-1.5 text-[10px] leading-3 text-[#5a6491]">
            <Delta label="较上月" arrow="↓" value={diff} />
          </div>
          <svg width="64" height="48" viewBox="0 0 64 48" className={clsx('mt-3.5', artPad)}>{art}</svg>
        </div>
      ))}
    </div>
  </Card>
);

/* ---------- energy mix ---------- */

const MIX_SLICES: Slice[] = [
  { from: 0, to: 168, color: '#0866ff' },
  { from: 168, to: 269, color: '#35b394' },
  { from: 269, to: 332, color: '#ffab2b' },
  { from: 332, to: 351, color: '#ff5a2a' },
  { from: 351, to: 360, color: '#3ea98f' },
];

const MIX = [
  { label: '火电', share: '58.6%', dot: 'bg-[#0866ff]' },
  { label: '风电', share: '22.4%', dot: 'bg-[#1fae8d]' },
  { label: '光伏', share: '12.7%', dot: 'bg-[#3db495]' },
  { label: '水电', share: '5.1%', dot: 'bg-[#a3abc4]' },
  { label: '储能', share: '1.2%', dot: 'bg-[#15c5e6]' },
];

const MixCard = () => (
  <Card className="px-[18px] pt-3">
    <CardHeader title="能源结构占比" />
    <div className="mt-3.5 flex items-start justify-between px-1">
      <div className="pt-0.5">
        <Donut slices={MIX_SLICES} outer={54} inner={39} />
      </div>
      <ul className="w-[90px] text-[11px] leading-6 text-[#3f4976]">
        {MIX.map(({ label, share, dot }) => (
          <li key={label} className="flex items-center">
            <i className={clsx('mr-2 size-[7px] rounded-full', dot)} />
            {label}
            <span className="ml-auto">{share}</span>
          </li>
        ))}
      </ul>
    </div>
  </Card>
);

/* ---------- unit status ---------- */

const STATES = [
  { label: '运行中', count: 32, color: '#1fb58c' },
  { label: '停机', count: 3, color: '#98a2c0' },
  { label: '检修中', count: 6, color: '#ff9d1a' },
  { label: '故障', count: 1, color: '#ff4433' },
];

const UNITS = [
  { name: '#1机组', state: '运行中', load: '520MW', health: '93.4' },
  { name: '#2机组', state: '运行中', load: '520MW', health: '92.1' },
  { name: '#3机组', state: '运行中', load: '550MW', health: '91.3' },
  { name: '#4机组', state: '检修中', load: '0MW', health: '--' },
  { name: '#5机组', state: '运行中', load: '510MW', health: '94.0' },
];

const UnitsCard = () => (
  <Card className="pt-3 pr-2.5 pl-3">
    <div className="pl-1.5">
      <CardHeader title="机组运行状态" />
    </div>
    <ul className="mt-3.5 grid grid-cols-[121fr_118fr_125fr_221fr] pl-[7px] text-[11px] leading-3 text-[#3f4976]">
      {STATES.map(({ label, count, color }) => (
        <li key={label} className="flex items-center">
          <svg width="13" height="13" viewBox="0 0 13 13" className="mr-2">
            <circle cx="6.500" cy="6.500" r="6.500" fill={color} />
            <path d="M6.500 3.500 8.800 9.300H7.300a.8.800 0 0 0-1.600 0H4.200z" fill="#fff" stroke="#fff" strokeLinejoin="round" />
          </svg>
          {label}
          <b className="ml-3 font-medium text-[#1b2660]">{count}</b>
        </li>
      ))}
    </ul>
    <div className="mt-3.5 grid grid-cols-5 gap-2.5">
      {UNITS.map(({ name, state, load, health }) => (
        <div key={name} className="rounded-md border border-[#e6ecf9] px-[9px] pt-2.5 pb-2 text-[10px] text-[#4a5482]">
          <div className="flex justify-between leading-3.5">
            <b className="font-semibold text-[#1b2660]">{name}</b>
            <span>600MW</span>
          </div>
          <span
            className={clsx(
              'mt-[9px] inline-block rounded px-1 align-top text-[9px] leading-4 font-medium',
              state === '运行中' ? 'bg-[#e0f6ed] text-[#17b07a]' : 'bg-[#ffeee0] text-[#ff7a1a]',
            )}
          >
            {state}
          </span>
          <div className="mt-2.5 flex justify-between leading-3">
            <span className="text-[9px]">负荷</span>
            {load}
          </div>
          <div className="mt-1.5 flex justify-between leading-3">
            <span className="text-[9px]">健康度</span>
            {health}
          </div>
        </div>
      ))}
    </div>
    <MoreLink className="mt-[7px] pr-[26px] pb-2 text-[11px] leading-3">查看全部机组</MoreLink>
  </Card>
);

/* ---------- page ---------- */

const App = () => (
  <div className="flex min-h-screen bg-[#f7f9fe] font-['Roboto','Noto_Sans_CJK_SC',sans-serif]">
    <Sidebar />
    <div className="min-w-0 flex-1">
      <TopBar />
      <main className="grid gap-2.5 px-4 pt-[11px] pb-[9px]">
        <KpiRow />
        <div className="grid min-h-[260px] grid-cols-[616fr_288fr_447fr] gap-2.5">
          <AssetMapCard />
          <HealthCard />
          <EnergyTrendCard />
        </div>
        <div className="grid min-h-[249px] grid-cols-[298fr_355fr_403fr_284fr] gap-2.5">
          <AlertsCard />
          <WorkOrdersCard />
          <ForecastCard />
          <ReliabilityCard />
        </div>
        <div className="grid min-h-[205px] grid-cols-[458fr_275fr_615fr] gap-2.5">
          <CarbonCard />
          <MixCard />
          <UnitsCard />
        </div>
      </main>
    </div>
  </div>
);

export default App;
